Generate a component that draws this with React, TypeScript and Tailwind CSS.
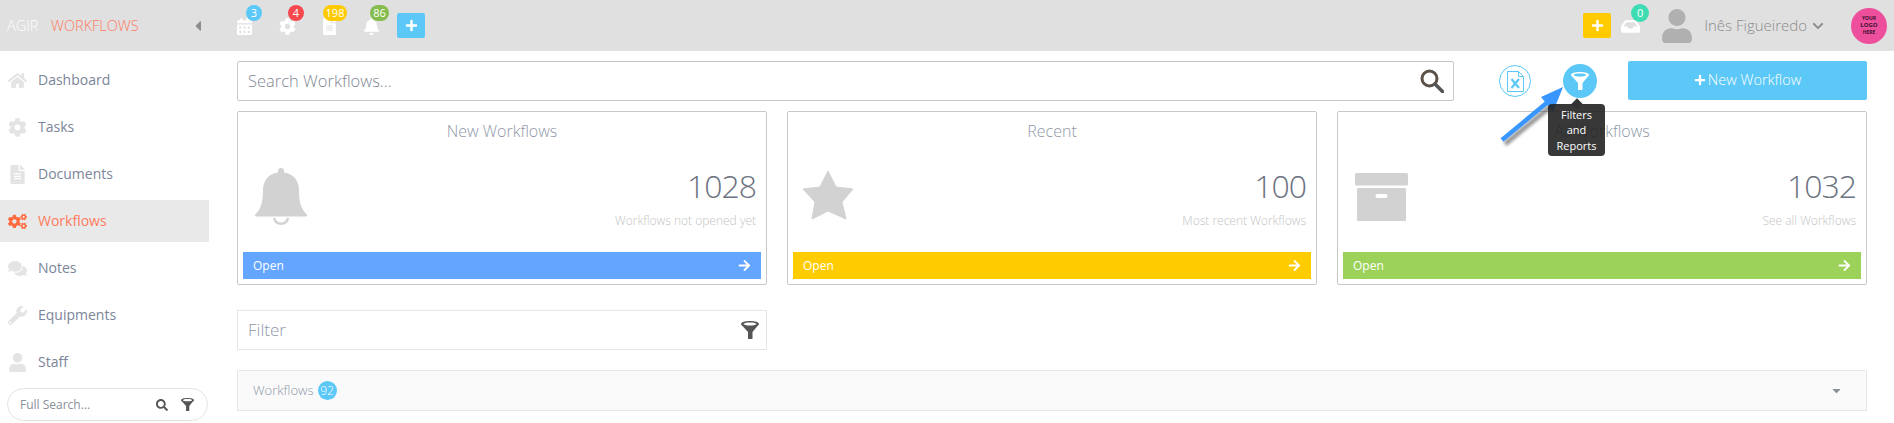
import React from "react";
import {
  FaArrowRight,
  FaBell,
  FaCalendarAlt,
  FaCaretDown,
  FaCaretLeft,
  FaChevronDown,
  FaCog,
  FaCogs,
  FaComments,
  FaFileAlt,
  FaHome,
  FaInbox,
  FaPlus,
  FaSearch,
  FaUser,
  FaWrench,
} from "react-icons/fa";

const NAV = [
  { label: "Dashboard", icon: FaHome },
  { label: "Tasks", icon: FaCog },
  { label: "Documents", icon: FaFileAlt },
  { label: "Workflows", icon: FaCogs, active: true },
  { label: "Notes", icon: FaComments },
  { label: "Equipments", icon: FaWrench },
  { label: "Staff", icon: FaUser },
];

const NOTIFICATIONS = [
  { icon: FaCalendarAlt, count: "3", badge: "bg-[#5bc8f8] w-4 left-[10px]", width: "w-[43px]" },
  { icon: FaCog, count: "4", badge: "bg-[#f9474e] w-4 left-[9px]", width: "w-[42px]" },
  { icon: FaFileAlt, count: "198", badge: "bg-[#ffcb00] w-6 left-[2px]", width: "w-[42px]" },
  { icon: FaBell, count: "86", badge: "bg-[#84bd4d] w-[19px] left-[7px]", width: "w-[34px]" },
];

function BellIcon() {
  return (
    <svg width="52" height="57" viewBox="0 0 52 57" fill="#d2d2d2" className="-mt-[2px] ml-px">
      <path d="M26 0c-2 0-3 1.2-3 3v1.5C13 6 8 13 8 22c0 14-3 20-7.5 24-1 1-.5 2.5 1 2.5h49c1.5 0 2-1.5 1-2.5C47 42 44 36 44 22c0-9-5-16-15-17.5V3c0-1.8-1-3-3-3z" />
      <path d="M18 50a8 7 0 0 0 16 0h-2.5a5.5 4.5 0 0 1-11 0z" />
    </svg>
  );
}

function StarIcon() {
  return (
    <svg width="52" height="50" viewBox="0 0 52 50" fill="#d2d2d2" className="-ml-[2px]">
      <path
        d="M26 1L34 17L51 19L40 32L44 49L26 41L10 49L13 32L1 19L18 17Z"
        stroke="#d2d2d2"
        strokeWidth="1"
        strokeLinejoin="round"
      />
    </svg>
  );
}

function BoxIcon() {
  return (
    <svg width="53" height="48" viewBox="0 0 53 48" fill="#d2d2d2" className="ml-px mt-[3px]">
      <rect x="0" y="0" width="53" height="12.5" rx="1.5" />
      <path d="M3 15h47a1 1 0 0 1 1 1v31a1 1 0 0 1-1 1H3a1 1 0 0 1-1-1V16a1 1 0 0 1 1-1z" />
      <rect x="20.5" y="21" width="12" height="4" rx="2" fill="#fff" />
    </svg>
  );
}

const CARDS = [
  { title: "New Workflows", value: "1028", note: "Workflows not opened yet", icon: BellIcon, bar: "bg-[#64a6ff]" },
  { title: "Recent", value: "100", note: "Most recent Workflows", icon: StarIcon, bar: "bg-[#ffcc00]" },
  { title: "All Workflows", value: "1032", note: "See all Workflows", icon: BoxIcon, bar: "bg-[#9dd25a]" },
];

function FunnelIcon({ size, className }: { size: number; className: string }) {
  return (
    <svg width={size} height={size} viewBox="0 0 18 18" fill="currentColor" fillRule="evenodd" className={className}>
      <path d="M0 3C0 1.3 4 0 9 0s9 1.3 9 3c0 .8-.8 1.4-1.5 2L11.5 11v6.5c0 .3-.2.5-.5.5H7.5c-.3 0-.5-.2-.5-.5V11L1.5 5C.8 4.4 0 3.8 0 3zM2.6 3c0 .8 2.9 1.5 6.4 1.5s6.4-.7 6.4-1.5S12.500 1.500 9 1.500 2.600 2.200 2.600 3z" />
    </svg>
  );
}

function LensIcon() {
  return (
    <svg width="24" height="24" viewBox="0 0 24 24" fill="none">
      <circle cx="9.500" cy="9.500" r="7.500" stroke="#5c5146" strokeWidth="3" />
      <path d="M15 15l7.500 7.500" stroke="#555" strokeWidth="3.500" strokeLinecap="round" />
    </svg>
  );
}

function ExcelIcon() {
  return (
    <svg width="17" height="21" viewBox="0 0 17 21" fill="none" stroke="#5bc8f8" strokeWidth="1">
      <path d="M.5.5h11l5 5v15H.5z" />
      <path d="M11.500.5v5h5" />
      <path d="M4.500 8l7.500 9M12 8l-7.500 9" strokeWidth="2.200" />
    </svg>
  );
}

// arrow annotation painted over the screenshot
function PointerArrow() {
  return (
    <svg className="absolute left-[1495px] top-[82px]" width="76" height="68" viewBox="0 0 76 68">
      <path d="M10 62L56 24" stroke="#00000066" strokeWidth="5" className="blur-[1.5px]" />
      <path d="M7 58L54 19" stroke="#3a96ff" strokeWidth="4.500" />
      <path d="M68 5L46 15L58 30Z" fill="#3a96ff" />
    </svg>
  );
}

function Header() {
  return (
    <header className="flex h-[51px] shrink-0 items-center bg-[#e0e0e0] pl-[7px] pr-[7px]">
      <div className="flex w-[186px] items-center text-[14.500px] font-light">
        <span className="w-[44px] text-white">AGIR</span>
        <span className="text-[#ff7b5f]">WORKFLOWS</span>
      </div>
      <FaCaretLeft className="w-[10px] text-[16px] text-[#8c8c8c]" />
      <div className="ml-[33px] flex items-center">
        {NOTIFICATIONS.map((item) => (
          <div key={item.count} className={`relative ${item.width} flex h-[51px] items-center`}>
            <item.icon className="mt-[2px] text-[17px] text-white" />
            <span className={`absolute top-[5px] flex h-4 items-center justify-center rounded-full text-[11px] text-white ${item.badge}`}>
              {item.count}
            </span>
          </div>
        ))}
      </div>
      <button className="flex h-[25px] w-7 items-center justify-center rounded-[2px] bg-[#5bc8f8] text-[13px] text-white">
        <FaPlus />
      </button>

      <button className="ml-auto flex h-[25px] w-7 items-center justify-center rounded-[2px] bg-[#ffcb00] text-[13px] text-white">
        <FaPlus />
      </button>
      <div className="relative ml-[10px] flex h-[51px] w-[39px] items-center">
        <FaInbox className="mt-[2px] text-[19px] text-white" />
        <span className="absolute left-[10px] top-[4px] flex h-[18px] w-[18px] items-center justify-center rounded-full bg-[#3fdcb4] text-[11px] text-white">
          0
        </span>
      </div>
      <FaUser className="text-[34px] text-[#b0b0b0]" />
      <span className="ml-[10px] text-[15px] font-light text-[#8d8d8d]">Inês Figueiredo</span>
      <FaChevronDown className="ml-[5px] text-[12px] text-[#8d8d8d]" />
      <div className="ml-[27px] flex h-9 w-9 flex-col items-center justify-center rounded-full bg-[#ee4f9c] text-[5px] font-bold leading-[7px] text-[#3a1030]">
        <span>YOUR</span>
        <span className="text-[6px]">LOGO</span>
        <span>HERE</span>
      </div>
    </header>
  );
}

function Sidebar() {
  return (
    <aside className="flex w-[209px] shrink-0 flex-col gap-[5px] pt-2">
      {NAV.map((item) => (
        <div
          key={item.label}
          className={`flex h-[42px] items-center pl-[8px] text-sm ${item.active ? "bg-[#e9e9e9] text-[#ff7b5f]" : "text-[#7b8599]"}`}
        >
          <span className="flex w-[30px] items-center">
            <item.icon className={`text-[19px] ${item.active ? "text-[#ff6a3f]" : "text-[#e4e4e4]"}`} />
          </span>
          {item.label}
        </div>
      ))}
      <div className="ml-[7px] flex h-[33px] w-[201px] items-center rounded-full border border-[#e3e3e3] pl-3 pr-[13px] text-xs text-[#8a8f99]">
        <span className="flex-1">Full Search...</span>
        <FaSearch className="text-[12px] text-[#555]" />
        <FunnelIcon size={13} className="ml-[13px] text-[#555]" />
      </div>
    </aside>
  );
}

function StatCard({ card }: { card: (typeof CARDS)[number] }) {
  const Icon = card.icon;
  return (
    <div className="flex h-[174px] flex-col rounded-[2px] border border-[#c8c8c8] p-[5px]">
      <div className="flex h-7 items-center justify-center text-base font-light text-[#8f98a8]">{card.title}</div>
      <div className="flex flex-1 items-start justify-between pl-[11px] pr-[5px] pt-[25px]">
        <Icon />
        <div className="text-right">
          <div className="-mt-[2px] text-[32px] font-light leading-[36px] tracking-[-1px] text-[#6b7280]">{card.value}</div>
          <div className="mt-[7px] text-xs font-light leading-5 text-[#c4c4c4]">{card.note}</div>
        </div>
      </div>
      <div className={`flex h-[27px] items-center justify-between px-[10px] text-xs text-white ${card.bar}`}>
        <span>Open</span>
        <FaArrowRight className="text-[13px]" />
      </div>
    </div>
  );
}

export default function App() {
  return (
    <div className="relative flex h-[423px] flex-col overflow-hidden bg-white font-['Open_Sans',sans-serif]">
      <Header />
      <div className="flex flex-1">
        <Sidebar />
        <main className="flex-1 pl-7 pr-[27px] pt-[10px]">
          <div className="flex h-10 items-center">
            <div className="flex h-10 w-[1217px] items-center justify-between rounded-[2px] border border-[#c8c8c8] pl-[10px] pr-[9px] text-[16.500px] font-light text-[#7f8794]">
              <span>Search Workflows...</span>
              <LensIcon />
            </div>
            <div className="ml-[45px] flex h-8 w-8 items-center justify-center rounded-full border border-[#5bc8f8]">
              <ExcelIcon />
            </div>
            <div className="relative ml-8 flex h-[34px] w-[34px] items-center justify-center rounded-full bg-[#5bc8f8]">
              <FunnelIcon size={18} className="text-white" />
              <div className="absolute left-[-15px] top-[40px] z-10 flex h-[52px] w-[57px] flex-col items-center justify-center rounded-[4px] bg-[#222222]/90 text-[11px] leading-[15.500px] text-white">
                <span className="absolute top-[-4px] h-2 w-2 rotate-45 bg-[#333]" />
                <span>Filters</span>
                <span>and</span>
                <span>Reports</span>
              </div>
            </div>
            <button className="ml-[31px] -mt-[2px] flex h-[39px] w-[239px] items-center justify-center gap-[2px] rounded-[2px] bg-[#5bc8f8] text-[14.500px] font-light text-white">
              <FaPlus className="text-xs" />
              New Workflow
            </button>
          </div>

          <div className="mt-[10px] grid grid-cols-3 gap-5">
            {CARDS.map((card) => (
              <StatCard key={card.title} card={card} />
            ))}
          </div>

          <div className="mt-[25px] flex h-[40px] w-[530px] items-center justify-between border border-[#e6e6e6] pl-[10px] pr-[7px] text-[17px] font-light text-[#8f98a8]">
            <span>Filter</span>
            <FunnelIcon size={18} className="text-[#555]" />
          </div>

          <div className="mt-5 flex h-[41px] items-center justify-between border border-[#e7e7e7] bg-[#fafafa] pl-[15px] pr-[23px] text-[13px] font-light text-[#8f98a8]">
            <div className="flex items-center gap-1">
              <span>Workflows</span>
              <span className="flex h-[19px] w-[19px] items-center justify-center rounded-full bg-[#5bc8f8] text-xs text-white">92</span>
            </div>
            <FaCaretDown className="text-[13px] text-[#8a8f99]" />
          </div>
        </main>
      </div>
      <PointerArrow />
    </div>
  );
}
